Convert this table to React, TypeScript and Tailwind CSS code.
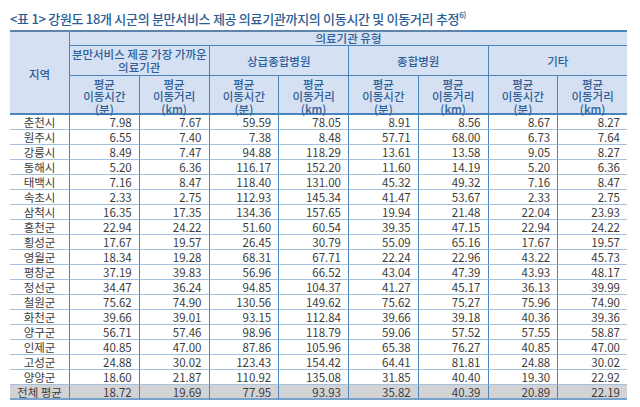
import React from "react";

const rows: [string, string[]][] = [
  ["춘천시", ["7.98", "7.67", "59.59", "78.05", "8.91", "8.56", "8.67", "8.27"]],
  ["원주시", ["6.55", "7.40", "7.38", "8.48", "57.71", "68.00", "6.73", "7.64"]],
  ["강릉시", ["8.49", "7.47", "94.88", "118.29", "13.61", "13.58", "9.05", "8.27"]],
  ["동해시", ["5.20", "6.36", "116.17", "152.20", "11.60", "14.19", "5.20", "6.36"]],
  ["태백시", ["7.16", "8.47", "118.40", "131.00", "45.32", "49.32", "7.16", "8.47"]],
  ["속초시", ["2.33", "2.75", "112.93", "145.34", "41.47", "53.67", "2.33", "2.75"]],
  ["삼척시", ["16.35", "17.35", "134.36", "157.65", "19.94", "21.48", "22.04", "23.93"]],
  ["홍천군", ["22.94", "24.22", "51.60", "60.54", "39.35", "47.15", "22.94", "24.22"]],
  ["횡성군", ["17.67", "19.57", "26.45", "30.79", "55.09", "65.16", "17.67", "19.57"]],
  ["영월군", ["18.34", "19.28", "68.31", "67.71", "22.24", "22.96", "43.22", "45.73"]],
  ["평창군", ["37.19", "39.83", "56.96", "66.52", "43.04", "47.39", "43.93", "48.17"]],
  ["정선군", ["34.47", "36.24", "94.85", "104.37", "41.27", "45.17", "36.13", "39.99"]],
  ["철원군", ["75.62", "74.90", "130.56", "149.62", "75.62", "75.27", "75.96", "74.90"]],
  ["화천군", ["39.66", "39.01", "93.15", "112.84", "39.66", "39.18", "40.36", "39.36"]],
  ["양구군", ["56.71", "57.46", "98.96", "118.79", "59.06", "57.52", "57.55", "58.87"]],
  ["인제군", ["40.85", "47.00", "87.86", "105.96", "65.38", "76.27", "40.85", "47.00"]],
  ["고성군", ["24.88", "30.02", "123.43", "154.42", "64.41", "81.81", "24.88", "30.02"]],
  ["양양군", ["18.60", "21.87", "110.92", "135.08", "31.85", "40.40", "19.30", "22.92"]],
];
const avg: string[] = ["18.72", "19.69", "77.95", "93.93", "35.82", "40.39", "20.89", "22.19"];

const font = { fontFamily: '"Noto Sans CJK KR", "Noto Sans", sans-serif' };

const head = "bg-[#d5e1f2] flex items-center justify-center text-center font-medium text-[#2f5f98] text-[11.5px]";

function SubHead({ kind }: { kind: "t" | "d" }) {
  return (
    <div className={`${head} border-l border-b-2 border-[#4a84bd] leading-[12.5px] pt-[4px]`}>
      <div>
        평균
        <br />
        {kind === "t" ? "이동시간" : "이동거리"}
        <br />
        {kind === "t" ? "(분)" : "(km)"}
      </div>
    </div>
  );
}

export default function App() {
  return (
    <div className="w-[640px] h-[407px] bg-white overflow-hidden" style={font}>
      <div className="pl-[10px] pt-[5px] h-[26px]">
        <div className="inline-block h-[21px] border-b-2 border-[#5f84ab] text-[13px] leading-[16px] font-medium text-[#2b5d96] tracking-[-0.3px] whitespace-nowrap">
          &lt;표 1&gt; 강원도 18개 시군의 분만서비스 제공 의료기관까지의 이동시간 및 이동거리 추정
          <span className="text-[8px] leading-none align-top">6)</span>
        </div>
      </div>
      <div className="pl-[10px] pt-[4px]">
        <div className="grid w-[617px] grid-cols-[59px_repeat(8,69.75px)] grid-rows-[14px_30px_39px_repeat(19,15px)] border-t-2 border-[#4a84bd] text-[#3c3c3c] text-[11.5px] leading-[14px]">
          <div className={`${head} row-span-3 border-b-2 border-[#4a84bd] pt-[3px]`}>지역</div>
          <div className={`${head} col-span-8 border-l border-b border-[#4a84bd] leading-[13px]`}>의료기관 유형</div>

          <div className={`${head} col-span-2 border-l border-b border-[#4a84bd] leading-[13px] pt-[1px]`}>
            <div>
              분만서비스 제공 가장 가까운
              <br />
              의료기관
            </div>
          </div>
          <div className={`${head} col-span-2 border-l border-b border-[#4a84bd]`}>상급종합병원</div>
          <div className={`${head} col-span-2 border-l border-b border-[#4a84bd]`}>종합병원</div>
          <div className={`${head} col-span-2 border-l border-b border-[#4a84bd]`}>기타</div>

          {(["t", "d", "t", "d", "t", "d", "t", "d"] as const).map((k, i) => (
            <SubHead key={i} kind={k} />
          ))}

          {rows.map(([name, vals], ri) => (
            <React.Fragment key={ri}>
              <div className="flex items-center justify-center border-b border-[#a3c0de]">{name}</div>
              {vals.map((v, i) => (
                <div key={i} className="flex items-center justify-end border-l border-b border-l-[#4a84bd] border-b-[#a3c0de] pr-[7px]">
                  {v}
                </div>
              ))}
            </React.Fragment>
          ))}

          <div className="flex items-center justify-center bg-[#d3d3d5] border-b-2 border-[#7aa3cc]">전체 평균</div>
          {avg.map((v, i) => (
            <div key={i} className="flex items-center justify-end bg-[#d3d3d5] border-l border-b-2 border-l-[#4a84bd] border-b-[#7aa3cc] pr-[7px]">
              {v}
            </div>
          ))}
        </div>
      </div>
    </div>
  );
}
